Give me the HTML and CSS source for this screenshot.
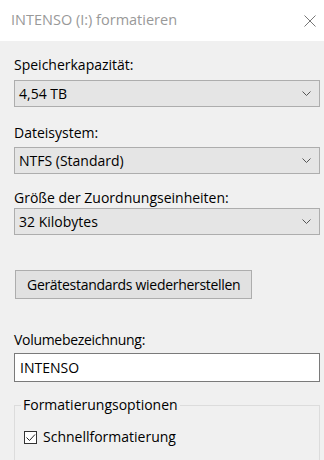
FILE: index.html
```html
<!DOCTYPE html>
<html lang="de">
<head>
  <meta charset="UTF-8">
  <meta name="viewport" content="width=device-width, initial-scale=1.0">
  <title>INTENSO (I:) formatieren</title>
  <link rel="stylesheet" href="styles.css">
</head>
<body>
  <div class="titlebar">
    <span class="title">INTENSO (I:) formatieren</span>
    <svg class="close" viewBox="0 0 12 12" width="12" height="12">
      <path d="M0.5 0.5 L11.5 11.5 M11.5 0.5 L0.5 11.5" stroke="#777" stroke-width="1" fill="none"/>
    </svg>
  </div>
  <div class="dialog">
    <div class="label label-first">Speicherkapazität:</div>
    <div class="combo combo-first">
      <span>4,54 TB</span>
      <svg class="chevron" viewBox="0 0 9 5" width="9" height="5"><path d="M0.5 0.5 L4.5 4.5 L8.5 0.5" stroke="#555" fill="none"/></svg>
    </div>

    <div class="label label-fs">Dateisystem:</div>
    <div class="combo combo-fs">
      <span>NTFS (Standard)</span>
      <svg class="chevron" viewBox="0 0 9 5" width="9" height="5"><path d="M0.5 0.5 L4.5 4.5 L8.5 0.5" stroke="#555" fill="none"/></svg>
    </div>

    <div class="label label-size">Größe der Zuordnungseinheiten:</div>
    <div class="combo">
      <span>32 Kilobytes</span>
      <svg class="chevron" viewBox="0 0 9 5" width="9" height="5"><path d="M0.5 0.5 L4.5 4.5 L8.5 0.5" stroke="#555" fill="none"/></svg>
    </div>

    <div class="button-row">
      <button class="btn">Gerätestandards wiederherstellen</button>
    </div>

    <div class="label label-volume">Volumebezeichnung:</div>
    <div class="textbox">INTENSO</div>

    <fieldset class="group">
      <legend>Formatierungsoptionen</legend>
      <div class="check">
        <span class="box">
          <svg viewBox="0 0 11 11" width="11" height="11"><path d="M1.5 5.5 L4.5 8.5 L10 2.5" stroke="#222" stroke-width="1" fill="none"/></svg>
        </span>
        <span>Schnellformatierung</span>
      </div>
    </fieldset>
  </div>
</body>
</html>
```
FILE: styles.css
```css
body {
  margin: 0;
  height: 460px;
  overflow: hidden;
  background: #f0f0f0;
  font-family: "Open Sans", "Noto Sans", sans-serif;
  font-size: 14px;
  color: #000;
}
.titlebar {
  height: 41px;
  background: #fff;
  display: flex;
  align-items: center;
  justify-content: space-between;
  padding: 0 8px 0 11px;
}
.title {
  color: #999;
  font-size: 14.5px;
  line-height: 20px;
  margin-top: -1px;
}
.close {
  display: block;
}
.dialog {
  padding: 14px 4px 0 14px;
}
.label {
  line-height: 20px;
}
.label-fs {
  margin-top: 16px;
}
.label-size {
  margin-top: 14px;
}
.label-volume {
  margin-top: 31px;
  letter-spacing: -0.3px;
}
.combo {
  height: 25px;
  border: 1px solid #adadad;
  background: #e5e5e5;
  display: flex;
  align-items: center;
  justify-content: space-between;
  padding: 0 8px 0 4px;
  line-height: 20px;
}
.combo-first {
  margin-top: 5px;
}
.combo-fs {
  margin-top: 4px;
}
.chevron {
  display: block;
}
.button-row {
  margin-top: 35px;
  padding-left: 1px;
}
.btn {
  font: inherit;
  letter-spacing: -0.3px;
  color: #000;
  height: 29px;
  padding: 0 11px;
  background: #e1e1e1;
  border: 1px solid #adadad;
  border-radius: 0;
}
.textbox {
  margin-top: 3px;
  height: 27px;
  border: 1px solid #7a7a7a;
  background: #fff;
  line-height: 27px;
  padding-left: 5px;
}
.group {
  margin: 13px 0 0;
  padding: 0 0 20px 6px;
  border: 1px solid #dcdcdc;
}
.group legend {
  padding: 0 2px;
  line-height: 20px;
}
.check {
  display: flex;
  align-items: center;
  gap: 6px;
  margin: 12px 0 0 3px;
  line-height: 20px;
}
.box {
  width: 13px;
  height: 13px;
  box-sizing: border-box;
  border: 1px solid #333;
  background: #fff;
  display: flex;
  align-items: center;
  justify-content: center;
}
.box svg {
  display: block;
}
```
